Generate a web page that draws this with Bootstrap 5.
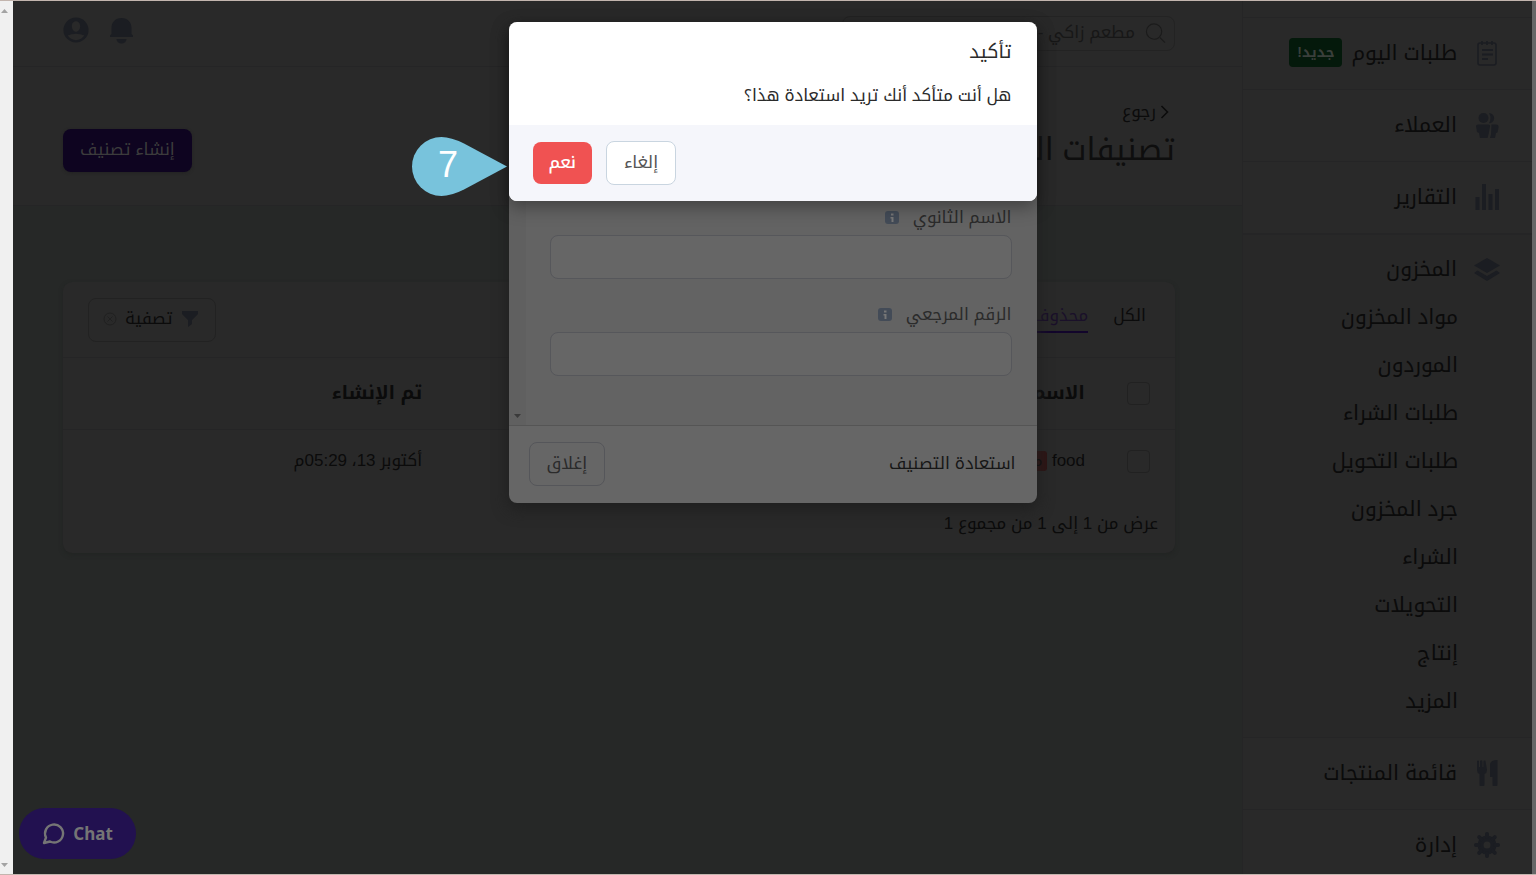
<!DOCTYPE html>
<html lang="ar" dir="rtl">
<head>
<meta charset="utf-8">
<meta name="viewport" content="width=device-width, initial-scale=1">
<title>تصنيفات المخزون</title>
<link rel="stylesheet" href="https://cdn.jsdelivr.net/npm/bootstrap@5.3.0/dist/css/bootstrap.min.css">
<style>
  :root { --panel:#292929; --canvas:#262827; --line:#252526; --ink:#0b0b0b; --icon:#1b1d22; }
  body { font-family:"Liberation Sans","Noto Kufi Arabic","Noto Sans Arabic","Noto Sans",sans-serif; font-size:17px; line-height:24px; color:var(--ink); background:var(--canvas); }
  a { color:inherit; text-decoration:none; }
  .shell { height:100vh; border-top:1px solid #c3b5ae; border-bottom:1px solid #c3b5ae; }
  .edge-strip { width:4px; background:#666; }
  .scroll-gutter { width:13px; background:#f0f0f0; padding:7px 0 6px; }
  .side-nav { width:290px; background:var(--panel); padding-top:16px; border-left:1px solid var(--line); font-size:21px; }
  .side-link { height:72px; padding:0 32px 2px 0; gap:17px; border-top:1px solid var(--line); }
  .side-link svg { width:26px; height:26px; }
  .side-group { background:#282828; border-top:2px solid var(--line); padding-bottom:12px; }
  .side-group .side-link { height:58px; border:0; padding-top:12px; }
  .sub-link { height:48px; padding-right:74px; }
  .new-tag { background:#04190b; color:#3a3f3b; font-size:14px; line-height:17px; padding:6px 8px; border-radius:4px; font-weight:700; margin-right:-8px; }
  .top-bar { height:66px; background:var(--panel); border-bottom:1px solid var(--line); padding:0 67px 0 50px; }
  .tool-set { gap:20px; padding-bottom:7px; }
  .tool-set a { color:var(--icon); }
  .search-wrap { width:333px; height:35px; border:1px solid #232323; border-radius:8px; padding:0 8px 1px; }
  .search-wrap input { background:transparent; border:0; outline:0; color:#161616; width:100%; }
  .search-wrap input::placeholder { color:#171717; }
  .page-head { height:139px; background:var(--panel); padding:33px 67px 0 50px; border-bottom:1px solid var(--line); }
  .back-link { padding-right:5px; }
  .page-title { font-size:31px; line-height:44px; margin:4px 0 0; font-weight:400; color:#0e0e0e; }
  .create-btn { background:#0e0420; color:#3c3c3c; border:0; border-radius:8px; height:43px; padding:0 17px 2px; margin-top:29px; box-shadow:0 1px 3px #222; }
  .main-area { padding:76px 67px 0 50px; }
  .data-card { background:var(--panel); border-radius:9px; box-shadow:0 2px 4px #222423; }
  .card-bar { height:76px; padding:0 29px 0 25px; border-bottom:1px solid var(--line); gap:25px; }
  .tab-link { padding-bottom:3px; border-bottom:2px solid transparent; margin-bottom:2px; }
  .tab-link.current { color:#1a1029; border-color:#12052b; }
  .filter-btn { height:44px; border:1px solid #222; border-radius:8px; background:transparent; color:var(--ink); padding:0 16px 2px 14px; gap:8px; }
  .list-table { width:100%; table-layout:fixed; }
  .list-table th, .list-table td { padding:0 12px; text-align:right; }
  .list-table th { height:71px; font-size:19px; border-bottom:1px solid var(--line); }
  .list-table td { height:66px; padding-bottom:2px; }
  .list-table .pick { width:78px; padding-right:25px; }
  .list-table .named { width:59.6%; }
  .list-table input { appearance:none; display:block; width:23px; height:23px; border:1px solid #212121; border-radius:4px; }
  .gone-tag { background:#2d1414; border-radius:3px; padding:2px 5px; font-size:14px; line-height:20px; }
  .card-foot { padding:17px 17px 17px; }
  .chat-btn { position:absolute; left:19px; bottom:15px; width:117px; height:51px; border:0; border-radius:26px; background:#221150; color:#757575; font:bold 17px "Noto Sans",sans-serif; gap:8px; direction:ltr; }
  .layer { position:absolute; inset:0 4px 0 13px; padding-top:21px; pointer-events:none; }
  .dialog-box { width:528px; border-radius:8px; overflow:hidden; pointer-events:auto; }
  .edit-box { background:#666; color:#2b2b2b; height:481px; box-shadow:0 6px 16px #1f1f1f; }
  .edit-body { background:#636363; padding:0 25px 49px 24px; }
  .edit-scroll { width:17px; background:#606060; padding-bottom:7px; }
  .edit-body label { line-height:24px; margin-bottom:5px; gap:14px; }
  .edit-body input + label { margin-top:24px; }
  .edit-body .form-control { height:44px; background:#666; border:1px solid #56575b; border-radius:8px; }
  .edit-foot { height:78px; border-top:1px solid #555; padding:0 21px 2px 20px; }
  .edit-foot span { color:#161616; }
  .flat-btn { background:transparent; border:1px solid #55565a; border-radius:8px; height:44px; padding:0 17px; color:inherit; }
  .confirm-box { background:#fff; color:#2b2b2b; box-shadow:0 6px 18px rgba(0,0,0,.35); }
  .confirm-text { padding:17px 25px; }
  .confirm-text h2 { font-size:19px; line-height:26px; margin:0 0 18px; font-weight:400; }
  .confirm-text p { margin:0; line-height:25px; }
  .confirm-foot { background:#f5f6fb; height:76px; padding-left:24px; gap:14px; }
  .confirm-foot .flat-btn { background:#fff; border-color:#c9d5e0; color:#555; }
  .yes-btn { height:42px; background:#f05252; color:#fff; border:0; border-radius:8px; padding:0 16px; font-weight:500; }
  .step-pin { position:absolute; top:115px; right:calc(100% + 2px); }
</style>
</head>
<body>
<div class="shell d-flex position-relative overflow-hidden">
  <div class="edge-strip flex-shrink-0"></div>

  <nav class="side-nav flex-shrink-0">
    <a href="#" class="side-link d-flex align-items-center">
      <svg viewBox="0 0 26 26" fill="none" stroke="#1b1d22" stroke-width="1.6"><rect x="4" y="3" width="18" height="22" rx="2"/><path d="M8 1v4M13 1v4M18 1v4M8 10h11M8 14.500h11M8 19h6" stroke-width="1.800"/></svg>
      <span>طلبات اليوم</span><span class="new-tag">جديد!</span>
    </a>
    <a href="#" class="side-link d-flex align-items-center">
      <svg viewBox="0 0 26 26" fill="#1b1d22"><circle cx="9.500" cy="6" r="5"/><path d="M15 1a5 5 0 0 1 0 10.300Q18 6 15 1zM2 14q0-1.500 2-1.500h10q2.500 0 2 2l-1.500 8-1 3.500H6l-1-5-2-1zM17.500 12.500H22q3 0 2.500 3l-1 5-1.500.5-1 5h-5l1-3.500z"/></svg>
      <span>العملاء</span>
    </a>
    <a href="#" class="side-link d-flex align-items-center">
      <svg viewBox="0 0 26 26" fill="#1b1d22"><path d="M1.500 13h4v13h-4zM8 0h4v26H8zM14.500 10h4v16h-4zM21 5h4v21h-4z"/></svg>
      <span>التقارير</span>
    </a>
    <div class="side-group">
      <a href="#" class="side-link d-flex align-items-center">
        <svg viewBox="0 0 26 26" fill="#1b1d22"><path d="M13 2l13 7.500L13 17 0 9.500zM3.500 14.500L13 20l9.500-5.500L26 17l-13 8L0 17z"/></svg>
        <span>المخزون</span>
      </a>
      <a href="#" class="sub-link d-flex align-items-center">مواد المخزون</a>
      <a href="#" class="sub-link d-flex align-items-center">الموردون</a>
      <a href="#" class="sub-link d-flex align-items-center">طلبات الشراء</a>
      <a href="#" class="sub-link d-flex align-items-center">طلبات التحويل</a>
      <a href="#" class="sub-link d-flex align-items-center">جرد المخزون</a>
      <a href="#" class="sub-link d-flex align-items-center">الشراء</a>
      <a href="#" class="sub-link d-flex align-items-center">التحويلات</a>
      <a href="#" class="sub-link d-flex align-items-center">إنتاج</a>
      <a href="#" class="sub-link d-flex align-items-center">المزيد</a>
    </div>
    <a href="#" class="side-link d-flex align-items-center">
      <svg viewBox="0 0 26 26" fill="#1b1d22"><path d="M3 1.500a1 1 0 0 1 2 0V7h1V1.500a1.200 1.200 0 0 1 2.400 0V7h1V1.500a1 1 0 0 1 2.200 0L13 10q0 3-2.500 4v10.500a2 2 0 0 1-5 0V14Q3 13 3 10zM23.500 0v24.500a2 2 0 0 1-5 0V17H16V5q0-5 7.500-5z"/></svg>
      <span>قائمة المنتجات</span>
    </a>
    <a href="#" class="side-link d-flex align-items-center">
      <svg viewBox="0 0 26 26"><g fill="none" stroke="#1b1d22"><circle cx="13" cy="13" r="6.500" stroke-width="6"/><g stroke-width="4" stroke-linecap="round"><path d="M13 2v3M13 21v3M2 13h3M21 13h3M5.200 5.200l2 2M18.800 18.800l2 2M5.200 20.800l2-2M18.800 7.200l2-2"/></g></g></svg>
      <span>إدارة</span>
    </a>
  </nav>

  <main class="flex-grow-1">
    <header class="top-bar d-flex align-items-center justify-content-between">
      <div class="search-wrap d-flex align-items-center gap-2">
        <svg class="flex-shrink-0" width="21" height="22" viewBox="0 0 22 22" fill="none" stroke="#1b1b1b" stroke-width="1.200"><circle cx="9.500" cy="9.500" r="8"/><path d="M15.500 15.500l5.500 5.500"/></svg>
        <input type="text" aria-label="بحث" placeholder="مطعم زاكي -">
      </div>
      <div class="tool-set d-flex align-items-center">
        <a href="#" aria-label="الإشعارات"><svg width="25" height="28" viewBox="0 0 25 28" fill="currentColor"><path d="M12.500 2C19 2 22.500 6.500 22.500 12v6l1.500 1.500V21H1v-1.500L2.500 18v-6C2.500 6.500 6 2 12.500 2zM7.500 23h10a5 4.500 0 0 1-10 0z"/></svg></a>
        <a href="#" aria-label="الحساب"><svg width="26" height="28" viewBox="0 0 28 28" fill="currentColor"><path fill-rule="evenodd" d="M14 .5a13.500 13.500 0 1 1 0 27 13.500 13.500 0 0 1 0-27zM14 4.500c-3 0-4.500 2.500-4.500 5.500s2 6 4.500 6 4.500-3 4.500-6-1.500-5.500-4.500-5.500zM5 20q4 5 9 5t9-5q-4-2-9-2t-9 2z"/></svg></a>
      </div>
    </header>

    <section class="page-head d-flex justify-content-between align-items-start">
      <div>
        <a href="#" class="back-link d-flex align-items-center gap-1"><svg width="10" height="14" viewBox="0 0 10 14" fill="none" stroke="currentColor" stroke-width="1.500"><path d="M1.500 1l6 6-6 6"/></svg><span>رجوع</span></a>
        <h1 class="page-title">تصنيفات المخزون</h1>
      </div>
      <button type="button" class="create-btn">إنشاء تصنيف</button>
    </section>

    <section class="main-area">
      <div class="data-card">
        <div class="card-bar d-flex align-items-center">
          <a href="#" class="tab-link">الكل</a>
          <a href="#" class="tab-link current">محذوف</a>
          <button type="button" class="filter-btn d-flex align-items-center me-auto">
            <svg width="18" height="17" viewBox="0 0 18 17" fill="#1b1d22"><path d="M1 1h16v3l-6 6v4l-4 3v-7L1 4z"/></svg>
            <span>تصفية</span>
            <svg width="14" height="14" viewBox="0 0 14 14" fill="none" stroke="#202020"><circle cx="7" cy="7" r="6"/><path d="M4.500 4.500l5 5M9.500 4.500l-5 5"/></svg>
          </button>
        </div>
        <table class="list-table">
          <thead><tr><th class="pick"><input type="checkbox" aria-label="تحديد الكل"></th><th class="named">الاسم</th><th>تم الإنشاء</th></tr></thead>
          <tbody><tr><td class="pick"><input type="checkbox" aria-label="تحديد food"></td><td>food <span class="gone-tag">محذوف</span></td><td>أكتوبر 13، 05:29م</td></tr></tbody>
        </table>
        <div class="card-foot">عرض من 1 إلى 1 من مجموع 1</div>
      </div>
    </section>
  </main>

  <div class="scroll-gutter flex-shrink-0 d-flex flex-column justify-content-between align-items-end">
    <svg width="13" height="5" viewBox="0 0 13 5" fill="#a3a3a3"><path d="M1 5h7L4.500 1z"/></svg>
    <svg width="13" height="5" viewBox="0 0 13 5" fill="#a3a3a3"><path d="M1 0h7L4.500 4z"/></svg>
  </div>

  <button type="button" class="chat-btn d-flex align-items-center justify-content-center">
    <svg width="23" height="23" viewBox="0 0 23 23" fill="none" stroke="#757575" stroke-width="2.400" stroke-linejoin="round"><path d="M2 21l2-5.500a9 9 0 1 1 4 4z"/></svg>
    <span>Chat</span>
  </button>

  <div class="layer d-flex justify-content-center align-items-start">
    <form class="dialog-box edit-box d-flex flex-column">
      <div class="d-flex flex-grow-1">
        <div class="edit-body flex-grow-1 d-flex flex-column justify-content-end">
          <label for="second-name" class="d-flex align-items-center">الاسم الثانوي
            <svg width="14" height="14" viewBox="0 0 14 14"><rect width="14" height="13" rx="3" fill="#434b57"/><path d="M6 2.500h2.500v2H6zM5.500 6h3v5h-2V7.500h-1z" fill="#777"/></svg></label>
          <input id="second-name" type="text" class="form-control">
          <label for="ref-number" class="d-flex align-items-center">الرقم المرجعي
            <svg width="14" height="14" viewBox="0 0 14 14"><rect width="14" height="13" rx="3" fill="#434b57"/><path d="M6 2.500h2.500v2H6zM5.500 6h3v5h-2V7.500h-1z" fill="#777"/></svg></label>
          <input id="ref-number" type="text" class="form-control">
        </div>
        <div class="edit-scroll d-flex align-items-end justify-content-center"><svg width="7" height="4" viewBox="0 0 7 4" fill="#3a3a3a"><path d="M0 0h7L3.500 4z"/></svg></div>
      </div>
      <div class="edit-foot d-flex align-items-center justify-content-between">
        <span>استعادة التصنيف</span>
        <button type="button" class="flat-btn">إغلاق</button>
      </div>
    </form>
  </div>

  <div class="layer d-flex justify-content-center align-items-start">
    <div class="position-relative">
      <div class="dialog-box confirm-box" role="dialog" aria-labelledby="confirm-title">
        <div class="confirm-text">
          <h2 id="confirm-title">تأكيد</h2>
          <p>هل أنت متأكد أنك تريد استعادة هذا؟</p>
        </div>
        <div class="confirm-foot d-flex align-items-center justify-content-end">
          <button type="button" class="flat-btn">إلغاء</button>
          <button type="button" class="yes-btn">نعم</button>
        </div>
      </div>
      <svg class="step-pin" width="95" height="59" viewBox="0 0 95 59"><path d="M95 29.500L52 6.500Q39 0 29.500 0a29.500 29.500 0 0 0 0 59Q39 59 52 52.500z" fill="#78c3dc"/><text x="36" y="40" text-anchor="middle" font-family="Liberation Sans, sans-serif" font-size="36" fill="#fff">7</text></svg>
    </div>
  </div>
</div>
<script src="https://cdn.jsdelivr.net/npm/bootstrap@5.3.0/dist/js/bootstrap.bundle.min.js"></script>
</body>
</html>
